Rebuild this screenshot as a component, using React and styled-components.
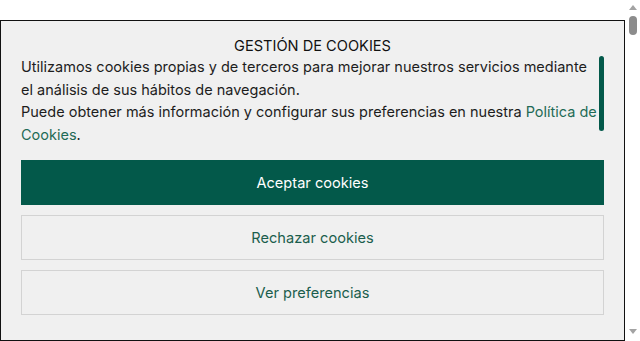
import styled, { createGlobalStyle } from 'styled-components'

const Global = createGlobalStyle`
  html, body {
    margin: 0;
    padding: 0;
  }
  body {
    background: #fff;
    font-family: Inter, "Liberation Sans", sans-serif;
  }
`

const Page = styled.div`
  display: flex;
  height: 100vh;
  overflow: hidden;
`

const Main = styled.div`
  flex: 1;
  padding-top: 20px;
  min-width: 0;
`

const PageScroll = styled.div`
  width: 15px;
  flex-shrink: 0;
  display: flex;
  flex-direction: column;
  align-items: center;
  background: #fff;
  padding-top: 5px;
`

const Arrow = styled.div`
  width: 0;
  height: 0;
  border-left: 4px solid transparent;
  border-right: 4px solid transparent;
  ${p => (p.$down
    ? 'border-top: 5px solid #a3a3a3; margin-top: auto; margin-bottom: 7px;'
    : 'border-bottom: 5px solid #a3a3a3;')}
`

const PageThumb = styled.div`
  width: 8px;
  height: 19px;
  margin-top: 6px;
  border-radius: 4px;
  background: #8c8c8c;
`

const Dialog = styled.div`
  box-sizing: border-box;
  height: 321px;
  border: 1px solid #111;
  background: #f0f0f0;
  padding: 15px 20px 0 20px;
  color: #1a1a1a;
`

const Title = styled.h2`
  margin: 0;
  font-size: 14.6px;
  font-weight: 400;
  line-height: 20px;
  text-align: center;
  color: #111;
`

const TextRow = styled.div`
  display: flex;
  height: 92px;
  margin-bottom: 12px;
  overflow: hidden;
`

const Text = styled.p`
  flex: 1;
  margin: 0;
  font-size: 14.5px;
  line-height: 22.5px;
  color: #1d1d1d;

  a {
    color: #1f6b56;
    text-decoration: none;
  }
`

const Track = styled.div`
  width: 5px;
  flex-shrink: 0;
`

const Thumb = styled.div`
  height: 75px;
  border-radius: 3px;
  background: #03594a;
`

const Buttons = styled.div`
  display: flex;
  flex-direction: column;
  gap: 10px;
`

const Button = styled.button`
  height: 45px;
  width: 100%;
  font-family: inherit;
  font-size: 14.6px;
  border: 1px solid ${p => (p.$primary ? '#03594a' : '#d3d3d3')};
  background: ${p => (p.$primary ? '#03594a' : 'transparent')};
  color: ${p => (p.$primary ? '#fff' : '#1b5e4d')};
  cursor: pointer;
`

export default function App() {
  return (
    <>
      <Global />
      <Page>
        <Main>
          <Dialog>
            <Title>GESTIÓN DE COOKIES</Title>
            <TextRow>
              <Text>
                Utilizamos cookies propias y de terceros para mejorar nuestros servicios mediante el análisis de sus hábitos de navegación.
                <br />
                Puede obtener más información y configurar sus preferencias en nuestra <a href="#">Política de Cookies</a>.
              </Text>
              <Track>
                <Thumb />
              </Track>
            </TextRow>
            <Buttons>
              <Button $primary>Aceptar cookies</Button>
              <Button>Rechazar cookies</Button>
              <Button>Ver preferencias</Button>
            </Buttons>
          </Dialog>
        </Main>
        <PageScroll>
          <Arrow />
          <PageThumb />
          <Arrow $down />
        </PageScroll>
      </Page>
    </>
  )
}
